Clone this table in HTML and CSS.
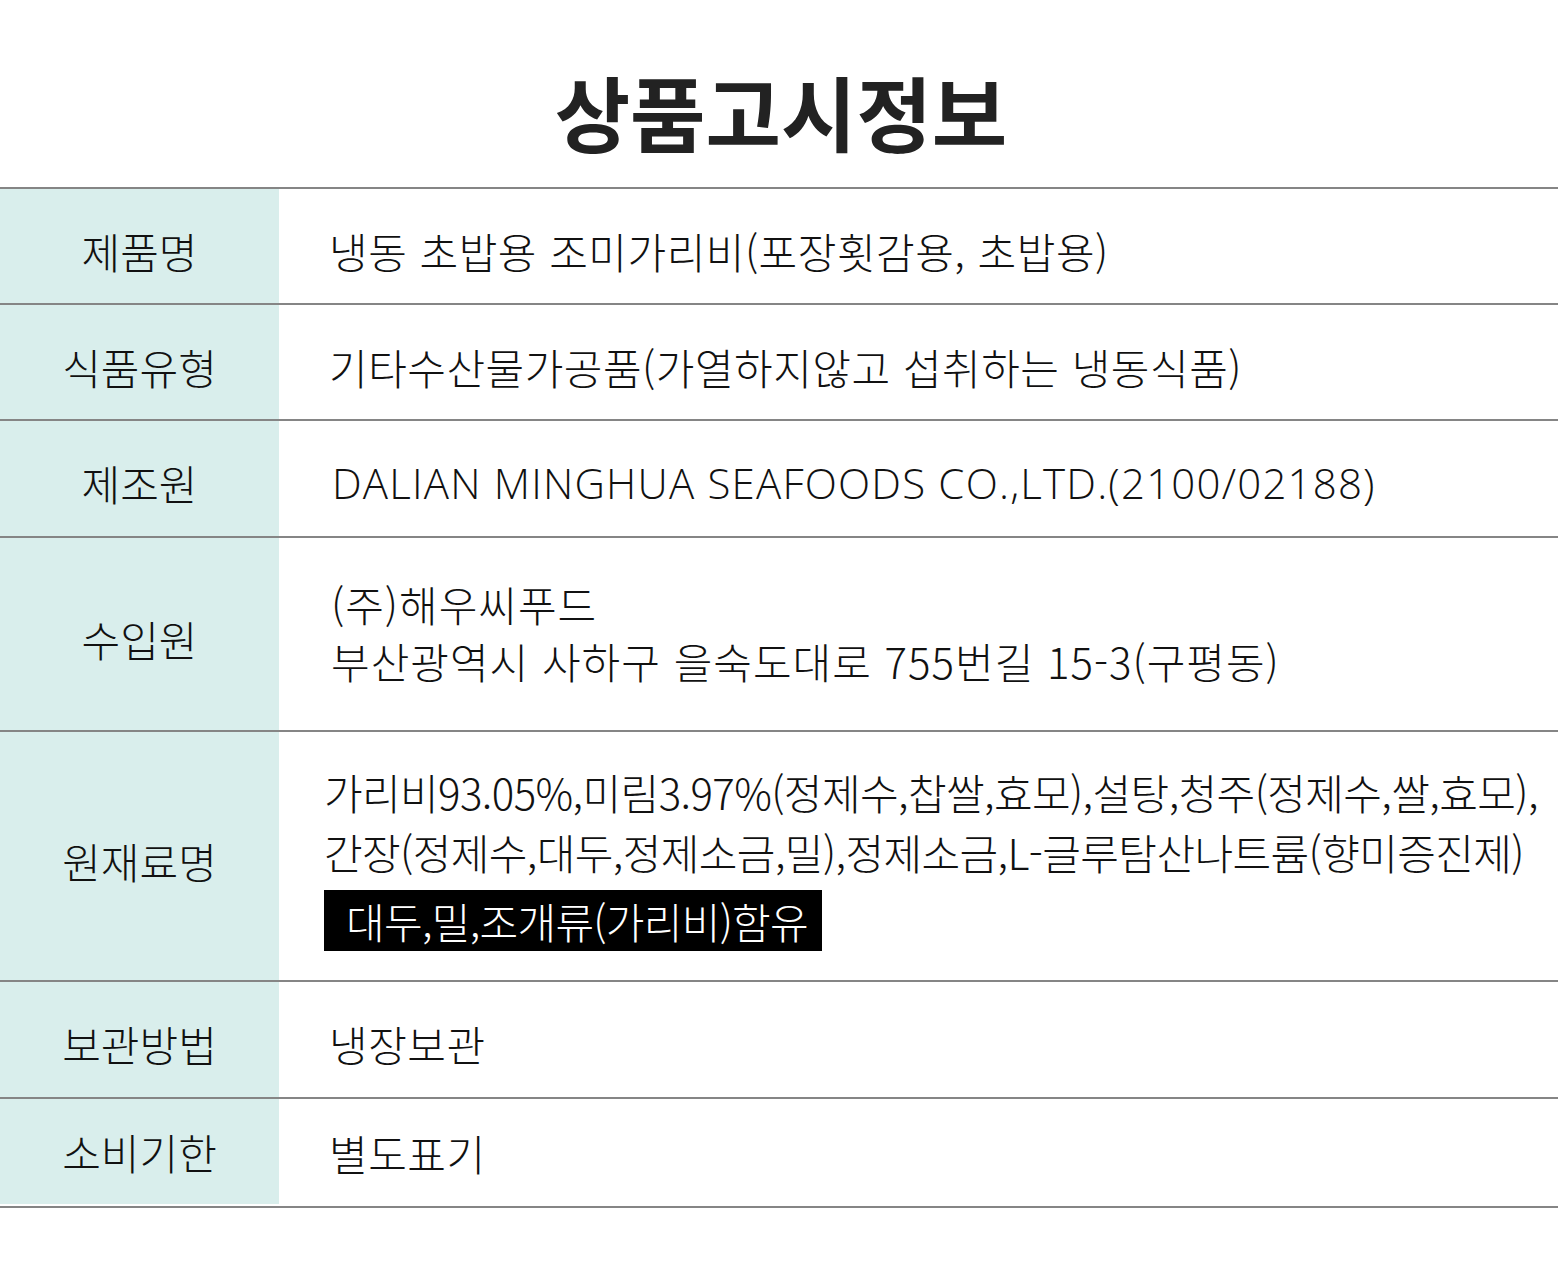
FILE: index.html
```html
<!DOCTYPE html>
<html lang="ko">
<head>
<meta charset="utf-8">
<title>상품고시정보</title>
<link rel="stylesheet" href="styles.css">
</head>
<body>
<div class="page">
  <h1 class="title">상품고시정보</h1>
  <div class="table">
    <div class="row h116">
      <div class="label">제품명</div>
      <div class="value">냉동 초밥용 조미가리비(포장횟감용, 초밥용)</div>
    </div>
    <div class="row h116">
      <div class="label">식품유형</div>
      <div class="value">기타수산물가공품(가열하지않고 섭취하는 냉동식품)</div>
    </div>
    <div class="row h117">
      <div class="label">제조원</div>
      <div class="value latin">DALIAN MINGHUA SEAFOODS CO.,LTD.(2100/02188)</div>
    </div>
    <div class="row h194">
      <div class="label">수입원</div>
      <div class="value multi">
        <div>(주)해우씨푸드</div>
        <div>부산광역시 사하구 을숙도대로 755번길 15-3(구평동)</div>
      </div>
    </div>
    <div class="row h250">
      <div class="label">원재료명</div>
      <div class="value ingredients">
        <div>가리비93.05%,미림3.97%(정제수,찹쌀,효모),설탕,청주(정제수,쌀,효모),</div>
        <div>간장(정제수,대두,정제소금,밀),정제소금,L-글루탐산나트륨(향미증진제)</div>
        <div class="allergy">대두,밀,조개류(가리비)함유</div>
      </div>
    </div>
    <div class="row h117">
      <div class="label">보관방법</div>
      <div class="value">냉장보관</div>
    </div>
    <div class="row h109 last">
      <div class="label">소비기한</div>
      <div class="value">별도표기</div>
    </div>
  </div>
</div>
</body>
</html>
```

FILE: styles.css
```css
* { box-sizing: border-box; }
html, body { margin: 0; padding: 0; background: #fff; }
body {
  font-family: "Noto Sans CJK KR", "Noto Sans", sans-serif;
  color: #111;
}
.page { width: 1562px; }
.title {
  margin: 0;
  height: 187px;
  display: flex;
  align-items: center;
  justify-content: center;
  padding-top: 34px;
  font-size: 82px;
  font-weight: 700;
  color: #222;
}
.table {
  width: 1558px;
  border-top: 2px solid #858585;
}
.row {
  display: flex;
  border-bottom: 2px solid #858585;
}
.h117 { height: 117px; }
.h116 { height: 116px; }
.h109 { height: 109px; }
.h194 { height: 194px; }
.h250 { height: 250px; }
.label {
  width: 279px;
  flex: none;
  background: #d9eeec;
  display: flex;
  align-items: center;
  justify-content: center;
  padding-top: 8px;
  font-size: 42px;
  font-weight: 300;
  color: #111;
}
.value {
  flex: 1;
  display: flex;
  align-items: center;
  padding-left: 50px;
  padding-top: 8px;
  font-size: 42px;
  font-weight: 300;
  color: #111;
  letter-spacing: 0.5px;
}
.last .label, .last .value { padding-top: 0; }
.last .label { margin-bottom: 2px; }
.value.latin {
  padding-left: 53px;
  font-family: "Open Sans", "Noto Sans CJK KR", sans-serif;
  font-size: 42px;
  letter-spacing: 1.2px;
}
.multi {
  flex-direction: column;
  align-items: flex-start;
  justify-content: center;
  line-height: 57px;
  padding-left: 52px;
  padding-top: 0;
  padding-bottom: 4px;
  letter-spacing: 1px;
}
.ingredients {
  flex-direction: column;
  align-items: flex-start;
  justify-content: center;
  padding-left: 45px;
  padding-top: 0;
  line-height: 60px;
  letter-spacing: -0.6px;
}
.allergy {
  margin-top: 8px;
  background: #000;
  color: #fff;
  line-height: 61px;
  padding: 0 14px 0 22px;
  letter-spacing: -0.7px;
}
```
